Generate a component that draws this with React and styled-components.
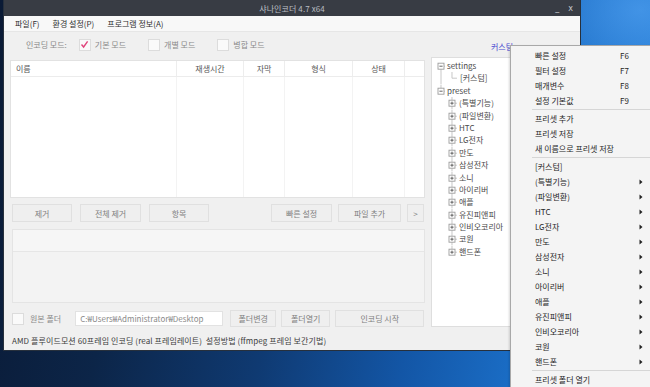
import React from 'react';
import styled, { createGlobalStyle } from 'styled-components';

const Global = createGlobalStyle`
  html, body { margin: 0; padding: 0; width: 650px; height: 387px; overflow: hidden; }
  body { font-family: "Noto Sans CJK KR", "Noto Sans", sans-serif; font-size: 8px; color: #333; }
  * { box-sizing: border-box; }
`;

const Desktop = styled.div`
  position: relative;
  width: 650px;
  height: 387px;
  overflow: hidden;
  background:
    radial-gradient(ellipse 120px 90px at 640px 10px, rgba(80,160,240,0.7), rgba(80,160,240,0) 100%),
    linear-gradient(100deg, #0a1a35 0%, #0c2548 22%, #0f3a72 45%, #1356a6 65%, #1a6cc4 80%, #2680da 100%);
`;

const Window = styled.div`
  position: absolute;
  left: 3px;
  top: 0;
  width: 578px;
  height: 351px;
  display: flex;
  flex-direction: column;
  background: #f0f0f0;
  border: 1px solid #27303c;
  border-top: none;
`;

const TitleBar = styled.div`
  height: 16px;
  flex: none;
  display: grid;
  grid-template-columns: 1fr auto 1fr;
  align-items: center;
  background: #383c44;
  color: #b9bcc2;
`;

const TitleText = styled.div`
  grid-column: 2;
  font-size: 8px;
  letter-spacing: 0.1px;
`;

const WinControls = styled.div`
  grid-column: 3;
  display: flex;
  justify-content: flex-end;
  gap: 9px;
  padding-right: 7px;
  font-family: "DejaVu Sans", sans-serif;
  font-size: 8px;
  color: #c6c8cc;
`;

const MenuBar = styled.div`
  height: 16px;
  flex: none;
  display: flex;
  align-items: center;
  gap: 13px;
  padding-left: 11px;
  background: #f8f8f8;
  border-bottom: 1px solid #e6e6e6;
`;

const MenuBarItem = styled.span`
  color: #2e2e2e;
`;

const Body = styled.div`
  flex: none;
  display: flex;
  gap: 6px;
  padding: 0 0 4px 6px;
`;

const LeftColumn = styled.div`
  width: 415px;
  display: flex;
  flex-direction: column;
`;

const ModeRow = styled.div`
  margin-top: 4px;
  height: 17px;
  display: flex;
  align-items: center;
  padding-left: 16px;
  color: #8a8a8a;
`;

const ModeLabel = styled.span`
  margin-right: 12px;
`;

const ModeOption = styled.label`
  display: flex;
  align-items: center;
  gap: 4px;
  margin-right: 22px;
`;

const Box = styled.span`
  width: 12px;
  height: 12px;
  flex: none;
  display: grid;
  place-items: center;
  background: #fafafa;
  border: 1px solid #dcdcdc;
`;

const CheckBox = ({ checked }) => (
  <Box>
    {checked && (
      <svg width="9" height="9" viewBox="0 0 9 9">
        <path d="M1.5 4.5 L3.6 7 L7.6 1.4" fill="none" stroke="#e0457c" strokeWidth="1.4" />
      </svg>
    )}
  </Box>
);

const COLS = '166px 67px 41px 68px 52px 1fr';

const ListView = styled.div`
  margin-top: 7px;
  height: 138px;
  display: flex;
  flex-direction: column;
  background: #fff;
  border: 1px solid #e2e2e2;
`;

const ListHeader = styled.div`
  height: 16px;
  flex: none;
  display: grid;
  grid-template-columns: ${COLS};
  border-bottom: 1px solid #ececec;
  color: #555;
`;

const HeaderCell = styled.div`
  display: flex;
  align-items: center;
  justify-content: ${p => (p.$left ? 'flex-start' : 'center')};
  padding-left: ${p => (p.$left ? '5px' : '0')};
  border-right: ${p => (p.$last ? 'none' : '1px solid #ededed')};
`;

const ListBody = styled.div`
  flex: 1;
  display: grid;
  grid-template-columns: ${COLS};
`;

const BodyCell = styled.div`
  border-right: ${p => (p.$last ? 'none' : '1px solid #f3f3f3')};
`;

const ButtonRow = styled.div`
  margin-top: 6px;
  height: 18px;
  display: flex;
  justify-content: space-between;
  padding: 0 1px 0 2px;
`;

const ButtonGroup = styled.div`
  display: flex;
  gap: ${p => p.$gap}px;
`;

const FlatButton = styled.div`
  width: ${p => p.$w}px;
  height: ${p => p.$h || 18}px;
  display: grid;
  place-items: center;
  background: #efefef;
  border: 1px solid #e0e0e0;
  color: #808080;
`;

const Panel = styled.div`
  margin: 7px 0 0 2px;
  height: 74px;
  background: #f3f3f3;
  border: 1px solid #e4e4e4;
`;

const PanelStrip = styled.div`
  height: 22px;
  background: #f6f6f6;
  border-bottom: 1px solid #e6e6e6;
`;

const BottomRow = styled.div`
  margin-top: 7px;
  height: 17px;
  display: flex;
  align-items: center;
  padding-left: 2px;
  color: #8a8a8a;
`;

const BottomLabel = styled.span`
  margin: 0 14px 0 6px;
`;

const PathInput = styled.div`
  width: 148px;
  height: 15px;
  display: flex;
  align-items: center;
  padding-left: 4px;
  margin-right: 7px;
  background: #fff;
  border: 1px solid #e2e2e2;
  color: #8a8a8a;
  white-space: nowrap;
  overflow: hidden;
`;

const BottomButtons = styled.div`
  display: flex;
  gap: 5px;
`;

const StatusBar = styled.div`
  height: 18px;
  flex: none;
  display: flex;
  align-items: center;
  padding-left: 8px;
  color: #3c3c3c;
  white-space: nowrap;
  letter-spacing: 0.1px;
`;

const RightColumn = styled.div`
  width: 82px;
  display: flex;
  flex-direction: column;
`;

const LinkLabel = styled.div`
  margin-top: 8px;
  height: 14px;
  text-align: right;
  color: #4848d0;
  font-size: 8px;
  line-height: 14px;
`;

const TreeBox = styled.div`
  margin-top: 3px;
  height: 270px;
  padding-top: 2px;
  background: #fff;
  border: 1px solid #dedede;
  color: #4a4a4a;
`;

const TreeRow = styled.div`
  height: 12.4px;
  display: flex;
  align-items: center;
  white-space: nowrap;
`;

const TreeText = styled.span`
  line-height: 12.4px;
  padding-left: ${p => p.$pad || 0}px;
`;

const H = 12.4;
const M = 6.2;
const LINE = '#c2c2c2';

const Expander = ({ cx, plus }) => (
  <g>
    <rect x={cx - 3} y={M - 3} width="6" height="6" fill="#fff" stroke="#9c9c9c" strokeWidth="0.9" />
    <line x1={cx - 1.6} y1={M} x2={cx + 1.6} y2={M} stroke="#555" strokeWidth="0.9" />
    {plus && <line x1={cx} y1={M - 1.6} x2={cx} y2={M + 1.6} stroke="#555" strokeWidth="0.9" />}
  </g>
);

const TreeGlyph = ({ level, kind, col0, last, first }) => {
  const w = level === 0 ? 15 : 27;
  const cx = level === 0 ? 9 : 20;
  return (
    <svg width={w} height={H} viewBox={`0 0 ${w} ${H}`} style={{ flex: 'none' }}>
      {col0 && <line x1="9" y1="0" x2="9" y2={H} stroke={LINE} strokeWidth="0.9" />}
      {level === 0 && !first && <line x1={cx} y1="0" x2={cx} y2={M} stroke={LINE} strokeWidth="0.9" />}
      {level === 0 && !last && <line x1={cx} y1={M} x2={cx} y2={H} stroke={LINE} strokeWidth="0.9" />}
      {level === 1 && (
        <line x1={cx} y1="0" x2={cx} y2={last ? M : H} stroke={LINE} strokeWidth="0.9" />
      )}
      <line x1={cx} y1={M} x2={w - 2} y2={M} stroke={LINE} strokeWidth="0.9" />
      {kind !== 'leaf' && <Expander cx={cx} plus={kind === 'plus'} />}
    </svg>
  );
};

const PRESETS = ['(특별기능)', '(파일변환)', 'HTC', 'LG전자', '만도', '삼성전자', '소니', '아이리버', '애플', '유진피앤피', '인비오코리아', '코원', '핸드폰'];

const ContextMenu = styled.div`
  position: absolute;
  left: 510px;
  top: 45px;
  width: 150px;
  height: 350px;
  padding-top: 2px;
  background: #f4f4f4;
  border: 1px solid #a8a8a8;
  box-shadow: -1px 1px 2px rgba(0,0,0,0.15);
  color: #262626;
`;

const MenuItem = styled.div`
  height: 15px;
  display: grid;
  grid-template-columns: 85px 19px 10px;
  align-items: center;
  padding-left: 24px;
  white-space: nowrap;
`;

const Separator = styled.div`
  height: 3px;
  display: flex;
  align-items: center;
  padding-left: 21px;
  &::after {
    content: '';
    flex: 1;
    height: 1px;
    background: #d6d6d6;
  }
`;

const SubArrow = () => (
  <svg width="4" height="6" viewBox="0 0 4 6">
    <path d="M0.5 0.5 L3.5 3 L0.5 5.5 Z" fill="#222" />
  </svg>
);

const MENU = [
  { label: '빠른 설정', key: 'F6' },
  { label: '필터 설정', key: 'F7' },
  { label: '매개변수', key: 'F8' },
  { label: '설정 기본값', key: 'F9' },
  'sep',
  { label: '프리셋 추가' },
  { label: '프리셋 저장' },
  { label: '새 이름으로 프리셋 저장' },
  'sep',
  { label: '[커스텀]' },
  ...PRESETS.map(p => ({ label: p, sub: true })),
  'sep',
  { label: '프리셋 폴더 열기' },
];

export default function App() {
  return (
    <Desktop>
      <Global />
      <Window>
        <TitleBar>
          <TitleText>샤나인코더 4.7 x64</TitleText>
          <WinControls>
            <span>_</span>
            <span>x</span>
          </WinControls>
        </TitleBar>
        <MenuBar>
          <MenuBarItem>파일(F)</MenuBarItem>
          <MenuBarItem>환경 설정(P)</MenuBarItem>
          <MenuBarItem>프로그램 정보(A)</MenuBarItem>
        </MenuBar>
        <Body>
          <LeftColumn>
            <ModeRow>
              <ModeLabel>인코딩 모드:</ModeLabel>
              <ModeOption><CheckBox checked />기본 모드</ModeOption>
              <ModeOption><CheckBox />개별 모드</ModeOption>
              <ModeOption><CheckBox />병합 모드</ModeOption>
            </ModeRow>
            <ListView>
              <ListHeader>
                <HeaderCell $left>이름</HeaderCell>
                <HeaderCell>재생시간</HeaderCell>
                <HeaderCell>자막</HeaderCell>
                <HeaderCell>형식</HeaderCell>
                <HeaderCell>상태</HeaderCell>
                <HeaderCell $last />
              </ListHeader>
              <ListBody>
                {[0, 1, 2, 3, 4, 5].map(i => <BodyCell key={i} $last={i === 5} />)}
              </ListBody>
            </ListView>
            <ButtonRow>
              <ButtonGroup $gap={8}>
                <FlatButton $w={60}>제거</FlatButton>
                <FlatButton $w={61}>전체 제거</FlatButton>
                <FlatButton $w={60}>항목</FlatButton>
              </ButtonGroup>
              <ButtonGroup $gap={6}>
                <FlatButton $w={61}>빠른 설정</FlatButton>
                <FlatButton $w={63}>파일 추가</FlatButton>
                <FlatButton $w={17}>&gt;</FlatButton>
              </ButtonGroup>
            </ButtonRow>
            <Panel>
              <PanelStrip />
            </Panel>
            <BottomRow>
              <CheckBox />
              <BottomLabel>원본 폴더</BottomLabel>
              <PathInput>C:₩Users₩Administrator₩Desktop</PathInput>
              <BottomButtons>
                <FlatButton $w={46} $h={17}>폴더변경</FlatButton>
                <FlatButton $w={49} $h={17}>폴더열기</FlatButton>
                <FlatButton $w={89} $h={17}>인코딩 시작</FlatButton>
              </BottomButtons>
            </BottomRow>
          </LeftColumn>
          <RightColumn>
            <LinkLabel>커스텀</LinkLabel>
            <TreeBox>
              <TreeRow>
                <TreeGlyph level={0} kind="minus" first />
                <TreeText>settings</TreeText>
              </TreeRow>
              <TreeRow>
                <TreeGlyph level={1} kind="leaf" col0 last />
                <TreeText $pad={1}>[커스텀]</TreeText>
              </TreeRow>
              <TreeRow>
                <TreeGlyph level={0} kind="minus" last />
                <TreeText>preset</TreeText>
              </TreeRow>
              {PRESETS.map((p, i) => (
                <TreeRow key={p}>
                  <TreeGlyph level={1} kind="plus" last={i === PRESETS.length - 1} />
                  <TreeText>{p}</TreeText>
                </TreeRow>
              ))}
            </TreeBox>
          </RightColumn>
        </Body>
        <StatusBar>AMD 플루이드모션 60프레임 인코딩 (real 프레임레이트)&nbsp;&nbsp;설정방법 (ffmpeg 프레임 보간기법)</StatusBar>
      </Window>
      <ContextMenu>
        {MENU.map((m, i) =>
          m === 'sep' ? (
            <Separator key={i} />
          ) : (
            <MenuItem key={i}>
              <span>{m.label}</span>
              <span>{m.key || ''}</span>
              <span>{m.sub ? <SubArrow /> : null}</span>
            </MenuItem>
          )
        )}
      </ContextMenu>
    </Desktop>
  );
}
